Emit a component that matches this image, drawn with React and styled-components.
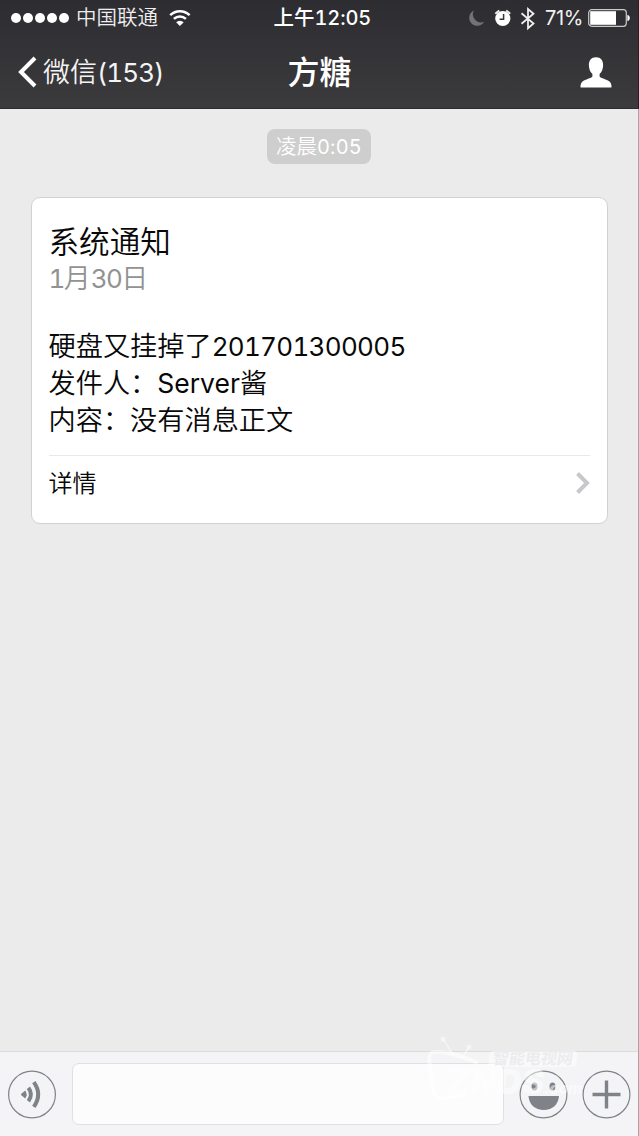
import React from 'react';
import styled, { createGlobalStyle } from 'styled-components';

const GlobalStyle = createGlobalStyle`
  * { box-sizing: border-box; }
  body {
    margin: 0;
    overflow: hidden;
    font-family: Inter, "Noto Sans CJK SC", sans-serif;
  }
`;

const Phone = styled.div`
  width: 639px;
  height: 1136px;
  display: flex;
  flex-direction: column;
  background: #ebebeb;
  border-right: 1px solid #a6a6a8;
  position: relative;
`;

const Header = styled.header`
  height: 109px;
  margin-right: -1px;
  border-right: 1px solid #222126;
  border-bottom: 1px solid #2d2c2e;
  background: linear-gradient(#2d2c31, #3b3a3c);
  color: #fff;
`;

const StatusBar = styled.div`
  height: 36px;
  display: grid;
  grid-template-columns: 1fr 98px 1fr;
  align-items: center;
  padding: 0 8px 0 11px;
  font-size: 20.5px;
  line-height: 36px;
`;

const StatusSide = styled.div`
  display: flex;
  align-items: center;
  justify-content: ${(props) => (props.$right ? 'flex-end' : 'flex-start')};
`;

const Dots = styled.div`
  display: flex;
  gap: 2px;
  margin-right: 7px;
`;

const Dot = styled.span`
  width: 10px;
  height: 10px;
  border-radius: 50%;
  background: #fff;
`;

const Carrier = styled.span`
  color: #eee;
  font-weight: 350;
  margin-right: 11px;
`;

const Clock = styled.span`
  padding: 0 0 0 2px;
  font-weight: 500;
  white-space: nowrap;
`;

const Percent = styled.span`
  font-size: 20px;
  line-height: 34px;
  letter-spacing: -0.4px;
  margin: -1px 5px 0 8px;
  color: #f2f2f2;
`;

const NavBar = styled.div`
  height: 72px;
  display: grid;
  grid-template-columns: 1fr 80px 1fr;
  align-items: center;
  padding: 0 26px 0 18px;
`;

const Back = styled.div`
  display: flex;
  align-items: center;
  gap: 6px;
  font-size: 27px;
  font-weight: 350;
  line-height: 40px;
  color: #f4f4f4;
`;

const BackLabel = styled.span`
  padding-top: 2px;
`;

const Title = styled.h1`
  margin: 0;
  padding: 2px 0 0 9px;
  font-size: 32px;
  font-weight: 500;
  line-height: 44px;
  text-align: center;
`;

const Profile = styled.div`
  display: flex;
  justify-content: flex-end;
`;

const Latin = styled.span`
  font-weight: ${(props) => props.$weight || 400};
  font-size: ${(props) => props.$size || 'inherit'};
  letter-spacing: ${(props) => props.$spacing || '0'};
  font-variant-numeric: tabular-nums;
`;

const Messages = styled.main`
  flex: 1;
  display: flex;
  flex-direction: column;
  align-items: center;
  padding-top: 20px;
`;

const TimeChip = styled.div`
  height: 35px;
  width: 104px;
  border-radius: 8px;
  background: #cecece;
  color: #fff;
  font-size: 20.5px;
  font-weight: 350;
  line-height: 36px;
  text-align: center;
  white-space: nowrap;
`;

const Card = styled.section`
  width: 577px;
  height: 327px;
  margin-top: 33px;
  padding: 25px 17px 0;
  border: 1px solid #d2d2d4;
  border-radius: 9px;
  background: #fff;
  color: #080808;
  font-weight: 350;
`;

const CardTitle = styled.h2`
  margin: 0;
  font-size: 30.6px;
  font-weight: inherit;
  line-height: 38px;
`;

const CardDate = styled.div`
  color: #929292;
  font-size: 27px;
  line-height: 35px;
`;

const CardBody = styled.div`
  margin-top: 33px;
  font-size: 27.2px;
  line-height: 36.4px;
  white-space: nowrap;
`;

const CardFooter = styled.div`
  display: flex;
  align-items: center;
  justify-content: space-between;
  height: 55px;
  margin-top: 16px;
  border-top: 1px solid #e8e8e8;
  font-size: 24px;
`;

const DetailLabel = styled.span`
  padding-bottom: 4px;
`;

const InputBar = styled.footer`
  height: 85px;
  display: flex;
  align-items: center;
  padding: 0 6px 0 8px;
  border-top: 1px solid #dcdcde;
  background: #f4f4f6;
`;

const TextBox = styled.div`
  width: 432px;
  height: 62px;
  margin: 0 15px;
  border: 1px solid #e0e0e2;
  border-radius: 7px;
  background: #fcfcfc;
`;

const RoundIcon = styled.svg`
  width: 49px;
  height: 49px;
  flex: none;
  margin-right: ${(props) => props.$gap || '0'};
`;

// translucent stamp that lies over the input bar
const Watermark = styled.div`
  position: absolute;
  left: 427px;
  top: 1034px;
  width: 170px;
  height: 80px;
  color: rgba(255, 255, 255, 0.5);
`;

const WatermarkArt = styled.svg`
  position: absolute;
  inset: 0;
`;

const WatermarkName = styled.span`
  position: absolute;
  left: 62px;
  top: 17px;
  width: 88px;
  height: 16px;
  border-radius: 4px;
  transform: skewX(-8deg);
  background: rgba(255, 255, 255, 0.45);
  color: #ececef;
  font-size: 16px;
  font-weight: 700;
  line-height: 15px;
  text-align: center;
`;

const WatermarkSite = styled.span`
  position: absolute;
  left: 20px;
  top: 31px;
  font-size: 34px;
  font-style: italic;
  font-weight: 900;
  line-height: 34px;
  white-space: nowrap;
`;

const WatermarkDomain = styled.span`
  font-size: 15px;
`;

function StatusIcons() {
  return (
    <svg width="70" height="26" viewBox="467 4 70 26" fill="none">
      <path d="M474 9.5a8 8 0 1 0 10.2 11.2A8 8 0 0 1 474 9.5z" fill="#737277" />
      <circle cx="502.8" cy="17.5" r="7.6" fill="#fff" />
      <path d="M495.3 12.8l4-3.4M510.2 12.8l-4-3.4" stroke="#eee" strokeWidth="2" />
      <path d="M503.6 13v5.3h-4" stroke="#353439" strokeWidth="1.5" />
      <path d="M521.5 12.2l12 10.3-5.5 4.8V8l5.5 4.7-12 10.1" stroke="#eee" strokeWidth="1.8" />
    </svg>
  );
}

function Wifi() {
  return (
    <svg width="22" height="18" viewBox="0 0 22 18" fill="none" stroke="#fff" strokeWidth="2.6">
      <path d="M1.2 6.1a14.1 14.1 0 0 1 19.4 0" />
      <path d="M4.9 9.9a8.8 8.8 0 0 1 12 0" />
      <path d="M7.1 13.2a5.5 5.5 0 0 1 7.6 0l-3.8 3.8z" fill="#fff" stroke="none" />
    </svg>
  );
}

function Battery() {
  return (
    <svg width="42" height="18" viewBox="0 0 42 18">
      <rect x="0.7" y="0.7" width="37.6" height="16.6" rx="3" fill="none" stroke="#c9c9ca" strokeWidth="1.2" />
      <path d="M2.2 2.2H28v13.6H2.2z" fill="#fff" />
      <path d="M39.4 6c3.2.4 3.2 5.6 0 6z" fill="#fff" />
    </svg>
  );
}

function App() {
  return (
    <Phone>
      <GlobalStyle />
      <Header>
        <StatusBar>
          <StatusSide>
            <Dots><Dot /><Dot /><Dot /><Dot /><Dot /></Dots>
            <Carrier>中国联通</Carrier>
            <Wifi />
          </StatusSide>
          <Clock>上午<Latin $weight={500} $size="20px" $spacing="-0.1px">12:05</Latin></Clock>
          <StatusSide $right>
            <StatusIcons />
            <Percent>71%</Percent>
            <Battery />
          </StatusSide>
        </StatusBar>
        <NavBar>
          <Back>
            <svg width="19" height="32" viewBox="0 0 19 32" fill="none" stroke="#fff" strokeWidth="4">
              <path d="M17 2L3 16l14 14" />
            </svg>
            <BackLabel>微信<Latin $size="26px" $spacing="-0.9px">(153)</Latin></BackLabel>
          </Back>
          <Title>方糖</Title>
          <Profile>
            <svg width="32" height="31" viewBox="0 0 32 31" fill="#fff">
              <path d="M16 0.3c4.8 0 7.3 3.4 7.1 8.2-.2 4.2-1.5 6.7-3.5 8.5v2.5c1.2 1.8 7.1 2.7 9.9 5 1.7 1.4 2 3.2 2 6H.5c0-2.8.3-4.6 2-6 2.8-2.3 8.7-3.2 9.9-5V17c-2-1.8-3.3-4.3-3.5-8.5C8.7 3.7 11.2.3 16 .3z" />
            </svg>
          </Profile>
        </NavBar>
      </Header>

      <Messages>
        <TimeChip>凌晨<Latin $size="20px" $spacing="0.2px">0:05</Latin></TimeChip>
        <Card>
          <CardTitle>系统通知</CardTitle>
          <CardDate><Latin $size="26px" $spacing="-1.6px">1</Latin>月<Latin $size="26px" $spacing="-1.6px">30</Latin>日</CardDate>
          <CardBody>
            <div>硬盘又挂掉了<Latin $size="26px" $spacing="-0.7px">201701300005</Latin></div>
            <div>发件人：<Latin $size="26.5px">Server</Latin>酱</div>
            <div>内容：没有消息正文</div>
          </CardBody>
          <CardFooter>
            <DetailLabel>详情</DetailLabel>
            <svg width="15" height="22" viewBox="0 0 15 22" fill="none" stroke="#c7c7cc" strokeWidth="4">
              <path d="M2.5 1.5L12 11l-9.500 9.500" />
            </svg>
          </CardFooter>
        </Card>
      </Messages>

      <InputBar>
        <RoundIcon viewBox="0 0 49 49" fill="none" stroke="#7f8389">
          <circle cx="24" cy="24.5" r="23.4" strokeWidth="1.2" />
          <path d="M14 24.5l3-2.6q1.5 2.6 0 5.2z" fill="#7f8389" strokeWidth="2" strokeLinejoin="round" />
          <path d="M20.4 17.8q5 6.7 0 13.4" strokeWidth="4" />
          <path d="M25.800 12.200q8.800 12.300 0 24.600" strokeWidth="4" />
        </RoundIcon>
        <TextBox />
        <RoundIcon $gap="14px" viewBox="0 0 49 49" fill="#7f8389">
          <circle cx="24.5" cy="24.5" r="23.4" fill="none" stroke="#7f8389" strokeWidth="1.2" />
          <ellipse cx="15.5" cy="16.5" rx="3" ry="4" />
          <ellipse cx="33.5" cy="16.5" rx="3" ry="4" />
          <path d="M9.500 26h30.500c-.6 8.500-6.500 14-15.250 14S10.100 34.500 9.500 26z" />
        </RoundIcon>
        <RoundIcon viewBox="0 0 49 49" fill="none" stroke="#7f8389">
          <circle cx="24.5" cy="24.5" r="23.4" strokeWidth="1.2" />
          <path d="M24.500 10.500v28M10.500 24.500h28" strokeWidth="3.4" />
        </RoundIcon>
      </InputBar>

      <Watermark>
        <WatermarkArt width="170" height="80" fill="none" stroke="currentColor">
          <circle cx="16" cy="5" r="2.5" fill="currentColor" stroke="none" />
          <circle cx="42" cy="13" r="2.5" fill="currentColor" stroke="none" />
          <path d="M17 6l9 15M41 14l-6 10" strokeWidth="1.5" />
          <path d="M51 29C35 22 17 17 7 18c-6 1-5 8-4 15l3 23c1 8 6 10 14 8l18-3" strokeWidth="4" />
        </WatermarkArt>
        <WatermarkName>智能电视网</WatermarkName>
        <WatermarkSite>ZNDS<WatermarkDomain>.com</WatermarkDomain></WatermarkSite>
      </Watermark>
    </Phone>
  );
}

export default App;
